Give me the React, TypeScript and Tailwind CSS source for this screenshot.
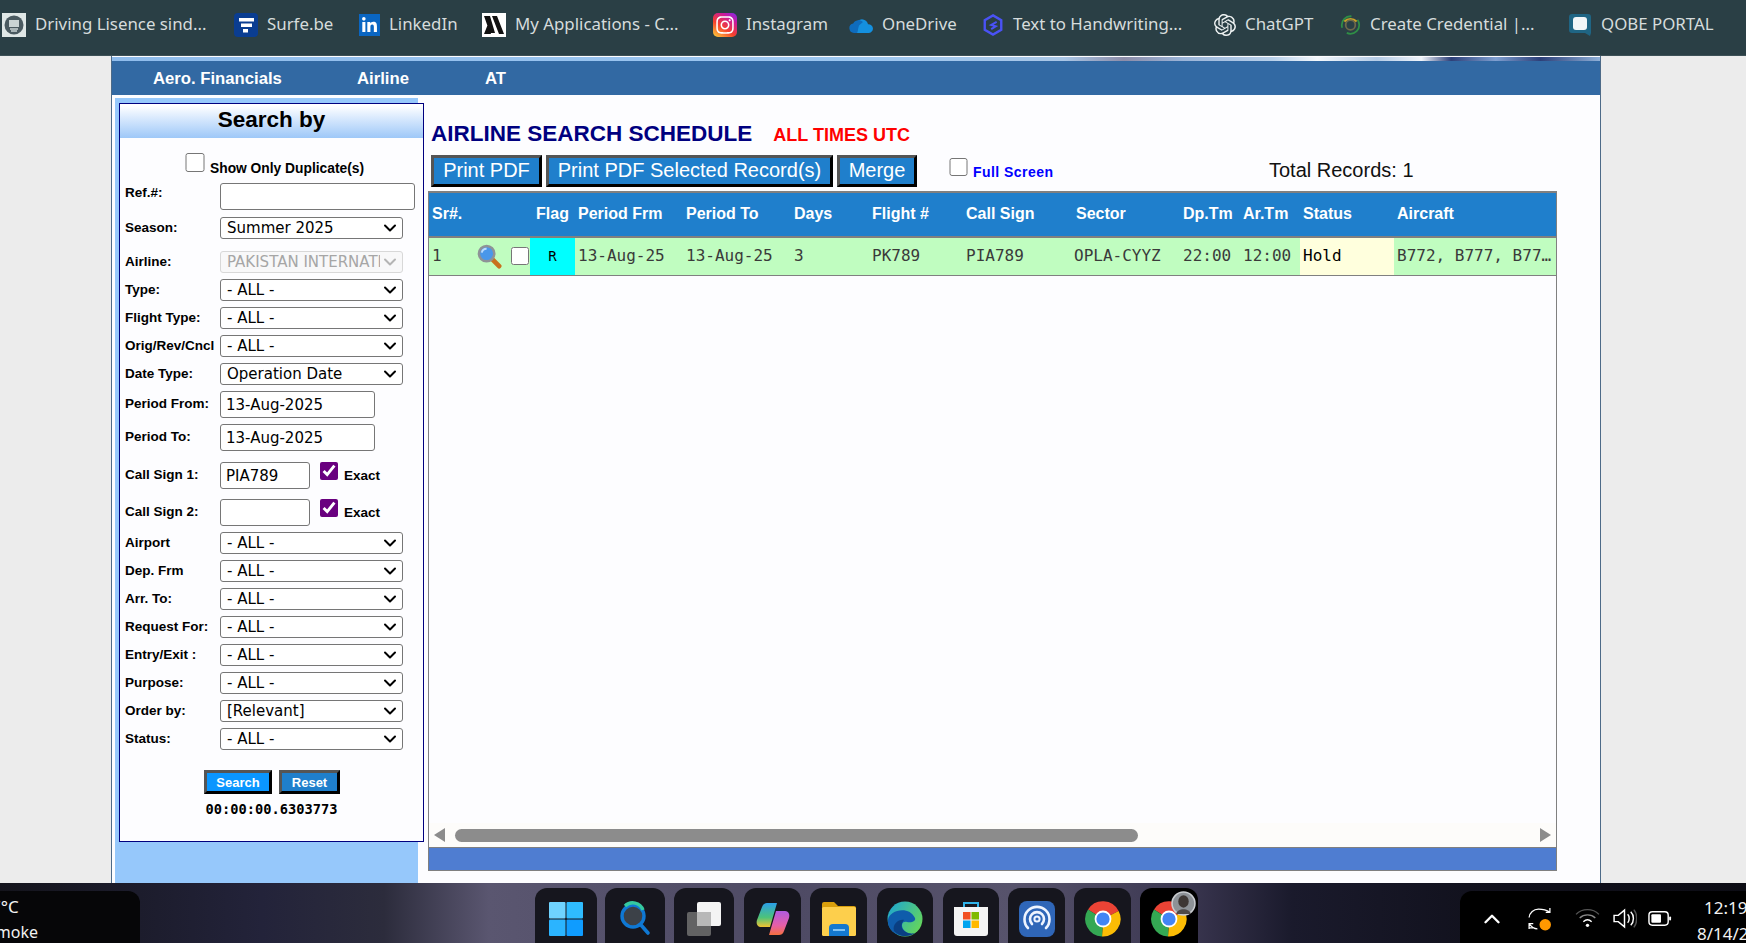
import React from 'react';
import { FaInstagram, FaLinkedinIn } from 'react-icons/fa';
import { SiOpenai } from 'react-icons/si';
import { ChevronDown, ChevronUp } from 'lucide-react';

const bookmarks = [
  { label: 'Driving Lisence sind...', icon: 'crest', box: 'ml-[2px] w-[232px]' },
  { label: 'Surfe.be', icon: 'surfe', box: 'w-[125px]' },
  { label: 'LinkedIn', icon: 'linkedin', box: 'w-[123px]' },
  { label: 'My Applications - C...', icon: 'apps', box: 'w-[231px]' },
  { label: 'Instagram', icon: 'instagram', box: 'w-[136px]' },
  { label: 'OneDrive', icon: 'onedrive', box: 'w-[133px]' },
  { label: 'Text to Handwriting...', icon: 'handwriting', box: 'w-[232px]' },
  { label: 'ChatGPT', icon: 'chatgpt', box: 'w-[126px]' },
  { label: 'Create Credential |...', icon: 'credential', box: 'w-[228px]' },
  { label: 'QOBE PORTAL', icon: 'qobe', box: 'w-[160px]' },
];

const BookmarkIcon = ({ name }: { name: string }) => {
  switch (name) {
    case 'crest':
      return (
        <svg viewBox="0 0 24 24" className="h-6 w-6 shrink-0">
          <rect width="24" height="24" fill="#dfe7e6" />
          <circle cx="12" cy="12" r="9.5" fill="#4a5a60" />
          <rect x="7" y="7" width="10" height="7" fill="#c9d3d3" />
          <path d="M8 16h8M9 18h6" stroke="#c9d3d3" strokeWidth="1.5" />
        </svg>
      );
    case 'surfe':
      return (
        <svg viewBox="0 0 24 24" className="h-6 w-6 shrink-0">
          <rect width="24" height="24" rx="4" fill="#0a3d91" />
          <rect x="5" y="5" width="15" height="3.5" fill="#fff" />
          <rect x="7" y="10.5" width="11" height="3.5" fill="#fff" />
          <rect x="9" y="16" width="5" height="3.5" fill="#fff" />
        </svg>
      );
    case 'linkedin':
      return (
        <span className="flex h-[22px] w-[21px] shrink-0 items-center justify-center bg-[#0a66c2] text-white">
          <FaLinkedinIn size={17} />
        </span>
      );
    case 'apps':
      return (
        <svg viewBox="0 0 24 24" className="h-6 w-6 shrink-0">
          <rect width="24" height="24" fill="#fff" />
          <path d="M2 3h6l5 17H8zM10 3h5l7 18h-5zM2 21l4-10 3 10z" fill="#111" />
        </svg>
      );
    case 'instagram':
      return (
        <span className="flex h-6 w-6 shrink-0 items-center justify-center rounded-[5px] bg-[linear-gradient(35deg,#fdc43a_5%,#f5402c_40%,#c9199e_75%,#7a2cf0)] text-white">
          <FaInstagram size={20} />
        </span>
      );
    case 'onedrive':
      return (
        <svg viewBox="0 0 24 16" className="h-[16px] w-6 shrink-0">
          <path d="M9 4a6 6 0 0 1 10 3.2A4.4 4.4 0 0 1 20 16H8z" fill="#1490df" />
          <path d="M5 16a4.8 4.8 0 0 1-.8-9.5A6 6 0 0 1 14 5l-4 3.5L8 16z" fill="#0f6cbd" />
        </svg>
      );
    case 'handwriting':
      return (
        <svg viewBox="0 0 24 24" className="h-6 w-[22px] shrink-0">
          <path d="M12 1.5 21 6.7v10.6L12 22.5 3 17.3V6.7z" fill="none" stroke="#4a52f5" strokeWidth="2.6" />
          <path d="M16 8.5 10 12l5 1.5-5 3" fill="none" stroke="#4a52f5" strokeWidth="2.2" />
        </svg>
      );
    case 'chatgpt':
      return <SiOpenai size={22} className="shrink-0 text-[#eef2f2]" />;
    case 'credential':
      return (
        <svg viewBox="0 0 24 24" className="h-6 w-[21px] shrink-0">
          <circle cx="12" cy="12" r="10" fill="none" stroke="#2f8f46" strokeWidth="2" strokeDasharray="20 8" />
          <path d="M5 8a10 10 0 0 1 14 0" fill="none" stroke="#c9a227" strokeWidth="2.4" />
          <circle cx="12" cy="12" r="5.5" fill="none" stroke="#6f6a4a" strokeWidth="2" />
        </svg>
      );
    default:
      return (
        <svg viewBox="0 0 24 24" className="h-6 w-6 shrink-0">
          <path d="M4 1h16a3 3 0 0 1 3 3v16l-1 3-5-3H4a3 3 0 0 1-3-3V4a3 3 0 0 1 3-3z" fill="#1f6584" />
          <rect x="5" y="4" width="14" height="13" rx="3" fill="#f2f6f8" />
        </svg>
      );
  }
};

const labelClass = "w-[95px] shrink-0 pb-[1px] text-[13.5px] font-bold leading-none whitespace-nowrap text-black";
const selectClass = "block h-[22px] w-full appearance-none rounded-[3px] border pr-[22px] pl-[6px] font-['DejaVu_Sans',sans-serif] text-[15px] leading-none";
const inputClass = "h-[27px] rounded-[3px] border border-[#767676] bg-white px-[5px] font-['DejaVu_Sans',sans-serif] text-[15px] text-black";
const raisedClass = "border-[3px] border-t-[#555555] border-l-[#555555] border-r-black border-b-black text-white";

const SelectRow = ({ label, value = '- ALL -', mt = 'mt-[6px]', disabled = false }: { label: string; value?: string; mt?: string; disabled?: boolean }) => (
  <div className={`flex items-center pl-[5px] ${mt}`}>
    <span className={labelClass}>{label}</span>
    <div className="relative h-[22px] w-[183px]">
      <select
        disabled={disabled}
        defaultValue={value}
        className={`${selectClass} ${disabled ? 'border-[#d8d8d8] bg-[#f8f8f9] text-[#a6a6a6]' : 'border-[#767676] bg-white text-black'}`}
      >
        <option>{value}</option>
      </select>
      <ChevronDown
        size={20}
        strokeWidth={2.4}
        className={`pointer-events-none absolute top-[1px] right-[3px] ${disabled ? 'text-[#b4b4b4]' : 'text-black'}`}
      />
    </div>
  </div>
);

const CallSignRow = ({ label, value, mt }: { label: string; value: string; mt: string }) => (
  <div className={`flex items-center pl-[5px] ${mt}`}>
    <span className={labelClass}>{label}</span>
    <input defaultValue={value} className={`${inputClass} w-[90px]`} />
    <input type="checkbox" defaultChecked className="mb-[9px] ml-[10px] h-[18px] w-[18px] accent-[#69007f]" />
    <span className="mt-[1px] ml-[6px] text-[13.5px] font-bold text-black">Exact</span>
  </div>
);

const Sidebar = () => (
  <aside className="ml-[3px] h-full w-[303px] shrink-0 bg-[#96c8fb] pt-[5px] pl-[4px]">
    <div className="h-[739px] w-[305px] border border-[#00007f] bg-[#fdfdff]">
      <div className="h-[34px] bg-[linear-gradient(180deg,#ffffff_5%,#d5e7fd_45%,#9ec8f8_100%)] text-center text-[22.5px] leading-[31px] font-bold text-black">
        Search by
      </div>
      <div className="mt-[15px] flex h-[19px] items-end pl-[65px]">
        <input type="checkbox" className="h-[19px] w-[20px]" />
        <span className="ml-[5px] translate-y-[8px] text-[13.8px] font-bold text-black">Show Only Duplicate(s)</span>
      </div>
      <div className="mt-[11px] flex items-center pl-[5px]">
        <span className={`${labelClass} mb-[6px]`}>Ref.#:</span>
        <input className={`${inputClass} h-[26px] w-[195px]`} />
      </div>
      <SelectRow label="Season:" value="Summer 2025" mt="mt-[7px]" />
      <SelectRow label="Airline:" value="PAKISTAN INTERNATIONAL" mt="mt-[12px]" disabled />
      <SelectRow label="Type:" />
      <SelectRow label="Flight Type:" />
      <SelectRow label="Orig/Rev/Cncl" />
      <SelectRow label="Date Type:" value="Operation Date" />
      <div className="mt-[6px] flex items-center pl-[5px]">
        <span className={labelClass}>Period From:</span>
        <input defaultValue="13-Aug-2025" className={`${inputClass} w-[155px]`} />
      </div>
      <div className="mt-[6px] flex items-center pl-[5px]">
        <span className={labelClass}>Period To:</span>
        <input defaultValue="13-Aug-2025" className={`${inputClass} w-[155px]`} />
      </div>
      <CallSignRow label="Call Sign 1:" value="PIA789" mt="mt-[11px]" />
      <CallSignRow label="Call Sign 2:" value="" mt="mt-[10px]" />
      <SelectRow label="Airport" />
      <SelectRow label="Dep. Frm" />
      <SelectRow label="Arr. To:" />
      <SelectRow label="Request For:" />
      <SelectRow label="Entry/Exit :" />
      <SelectRow label="Purpose:" />
      <SelectRow label="Order by:" value="[Relevant]" />
      <SelectRow label="Status:" />
      <div className="mt-[20px] flex justify-center gap-[7px] pl-[1px]">
        <button className={`h-[24px] w-[68px] bg-[#0a96ff] text-[13px] leading-none font-bold ${raisedClass}`}>Search</button>
        <button className={`h-[24px] w-[61px] bg-[#1f7fcc] text-[13px] leading-none font-bold ${raisedClass}`}>Reset</button>
      </div>
      <div className="mt-[7px] text-center font-['DejaVu_Sans_Mono',monospace] text-[13.7px] leading-[16px] font-bold text-black">
        00:00:00.6303773
      </div>
    </div>
  </aside>
);

const Magnifier = () => (
  <svg viewBox="0 0 26 26" className="h-[25px] w-[25px]">
    <path d="M15 15 23 23" stroke="#c8701e" strokeWidth="5" strokeLinecap="round" />
    <circle cx="10" cy="10" r="8" fill="#4a97ea" stroke="#8e9397" strokeWidth="2.6" />
    <path d="M5 9a5 5 0 0 1 5-4" stroke="#bcdcff" strokeWidth="2" fill="none" />
  </svg>
);

const headers = [
  { label: 'Sr#.', span: 3, extra: '' },
  { label: 'Flag', span: 1, extra: 'pl-[6px]' },
  { label: 'Period Frm', span: 1, extra: '' },
  { label: 'Period To', span: 1, extra: '' },
  { label: 'Days', span: 1, extra: '' },
  { label: 'Flight #', span: 1, extra: '' },
  { label: 'Call Sign', span: 1, extra: '' },
  { label: 'Sector', span: 1, extra: '' },
  { label: 'Dp.Tm', span: 1, extra: '' },
  { label: 'Ar.Tm', span: 1, extra: '' },
  { label: 'Status', span: 1, extra: '' },
  { label: 'Aircraft', span: 1, extra: '' },
];

const cellClass = "truncate px-[3px] text-left text-[16px] font-normal";

const ScheduleTable = () => (
  <div className="flex h-[680px] w-[1129px] flex-col border border-t-2 border-[#808080] bg-[#fdfdff]">
    <div className="flex-1">
      <table className="w-full table-fixed border-collapse font-['DejaVu_Sans_Mono',monospace] text-[#3a3a3a]">
        <colgroup>
          <col className="w-[46px]" />
          <col className="w-[35px]" />
          <col className="w-[20px]" />
          <col className="w-[45px]" />
          <col className="w-[108px]" />
          <col className="w-[108px]" />
          <col className="w-[78px]" />
          <col className="w-[94px]" />
          <col className="w-[110px]" />
          <col className="w-[107px]" />
          <col className="w-[60px]" />
          <col className="w-[60px]" />
          <col className="w-[94px]" />
          <col />
        </colgroup>
        <thead>
          <tr className="h-[44px] border-b-2 border-[#808080] bg-[#1f7fcc]">
            {headers.map((h) => (
              <th key={h.label} colSpan={h.span} className={`px-[3px] pb-[2px] text-left font-['Liberation_Sans',sans-serif] text-[16px] font-bold whitespace-nowrap text-white ${h.extra}`}>
                {h.label}
              </th>
            ))}
          </tr>
        </thead>
        <tbody>
          <tr className="h-[38px] border-b border-[#808080] bg-[#c0fdc0]">
            <td className={cellClass}>1</td>
            <td className="pl-[2px]"><Magnifier /></td>
            <td><input type="checkbox" className="ml-[1px] block h-[18px] w-[18px]" /></td>
            <td className="bg-[#00ffff] text-center text-[14px] text-black">R</td>
            <td className={cellClass}>13-Aug-25</td>
            <td className={cellClass}>13-Aug-25</td>
            <td className={cellClass}>3</td>
            <td className={cellClass}>PK789</td>
            <td className={cellClass}>PIA789</td>
            <td className={`${cellClass} pl-[1px]`}>OPLA-CYYZ</td>
            <td className={cellClass}>22:00</td>
            <td className={cellClass}>12:00</td>
            <td className={`${cellClass} bg-[#ffffdd] text-black`}>Hold</td>
            <td className={cellClass}>B772, B777, B777, B773</td>
          </tr>
        </tbody>
      </table>
    </div>
    <div className="flex h-[24px] items-center bg-[#fdfcfa] pr-[5px] pl-[5px]">
      <div className="h-0 w-0 border-y-[7px] border-r-[11px] border-y-transparent border-r-[#8c8c8c]" />
      <div className="ml-[10px] h-[13px] w-[683px] rounded-full bg-[#8c8c8c]" />
      <div className="ml-auto h-0 w-0 border-y-[7px] border-l-[11px] border-y-transparent border-l-[#8c8c8c]" />
    </div>
    <div className="h-[23px] border-t border-[#808080] bg-[#4f7dd1]" />
  </div>
);

const tiles = ['ml-[535px] w-[62px]', 'ml-[8px] w-[60px]', 'ml-[9px] w-[60px]', 'ml-[10px] w-[57px]', 'ml-[9px] w-[57px]', 'ml-[10px] w-[56px]', 'ml-[10px] w-[56px]', 'ml-[9px] w-[57px]', 'ml-[9px] w-[57px]', 'ml-[9px] w-[58px]'];

const TaskIcon = ({ index }: { index: number }) => {
  const size = 'h-[36px] w-[36px]';
  switch (index) {
    case 0:
      return (
        <svg viewBox="0 0 36 36" className={size}>
          <rect x="1" y="1" width="16.5" height="16.5" rx="1" fill="#6fd3ff" />
          <rect x="18.5" y="1" width="16.5" height="16.5" rx="1" fill="#2fbcff" />
          <rect x="1" y="18.5" width="16.5" height="16.5" rx="1" fill="#2bb4ff" />
          <rect x="18.5" y="18.5" width="16.5" height="16.5" rx="1" fill="#0f9cff" />
        </svg>
      );
    case 1:
      return (
        <svg viewBox="0 0 36 36" className={size}>
          <circle cx="16" cy="15" r="11" fill="#3c4148" stroke="#0f78d4" strokeWidth="3.4" />
          <path d="M8 5a11 11 0 0 1 18 4" fill="none" stroke="#35c9a0" strokeWidth="3.4" />
          <path d="M24 24l7 8" stroke="#0f78d4" strokeWidth="3.6" strokeLinecap="round" />
        </svg>
      );
    case 2:
      return (
        <svg viewBox="0 0 36 36" className={size}>
          <rect x="11" y="1" width="24" height="24" rx="2" fill="#f4f4f4" />
          <rect x="1" y="11" width="24" height="24" rx="2" fill="#6a6a6a" fillOpacity="0.9" />
          <rect x="11" y="11" width="14" height="14" fill="#b8b8b8" />
        </svg>
      );
    case 3:
      return (
        <svg viewBox="0 0 36 36" className={size}>
          <defs>
            <linearGradient id="copilotA" x1="0" y1="0" x2="0" y2="1">
              <stop offset="0" stopColor="#2b9fe8" />
              <stop offset="0.6" stopColor="#4cc37a" />
              <stop offset="1" stopColor="#f2c230" />
            </linearGradient>
            <linearGradient id="copilotB" x1="0" y1="0" x2="0" y2="1">
              <stop offset="0" stopColor="#b05be0" />
              <stop offset="0.6" stopColor="#e65fa8" />
              <stop offset="1" stopColor="#f5703e" />
            </linearGradient>
          </defs>
          <path d="M12 2h10l-7 24H6c-4 0-5-4-4-7l5-13c1-3 3-4 5-4z" fill="url(#copilotA)" />
          <path d="M24 34H14l7-24h9c4 0 5 4 4 7l-5 13c-1 3-3 4-5 4z" fill="url(#copilotB)" />
        </svg>
      );
    case 4:
      return (
        <svg viewBox="0 0 36 36" className={size}>
          <path d="M1 3a2 2 0 0 1 2-2h10l4 4h16a2 2 0 0 1 2 2v4H1z" fill="#d99f0c" />
          <rect x="1" y="6" width="34" height="29" rx="1.5" fill="#fdcf4c" />
          <path d="M8 35v-8a4 4 0 0 1 4-4h12a4 4 0 0 1 4 4v8z" fill="#1478cf" />
          <rect x="12" y="28" width="12" height="2" fill="#7fc2f5" />
        </svg>
      );
    case 5:
      return (
        <svg viewBox="0 0 36 36" className={size}>
          <defs>
            <linearGradient id="edgeA" x1="0" y1="0" x2="1" y2="0.6">
              <stop offset="0" stopColor="#1aa3d8" />
              <stop offset="1" stopColor="#62d45f" />
            </linearGradient>
          </defs>
          <circle cx="18" cy="18" r="17.5" fill="url(#edgeA)" />
          <path d="M1 19C2 9 22 4 28 17c1 3-3 5-8 4-5-1-6 3-4 7 2 3 7 6 12 4a18 18 0 0 1-10 3C8 35 0 28 1 19z" fill="#0f5cab" />
          <path d="M17 19c-5-1-12 4-10 11 3 3 7 5 11 5 4 0 7-1 10-3-5 2-11-1-13-5-1-3 0-6 2-8z" fill="#0a3f82" />
        </svg>
      );
    case 6:
      return (
        <svg viewBox="0 0 36 36" className={size}>
          <path d="M11 6V2h14v4" fill="none" stroke="#2fb2e8" strokeWidth="2" />
          <path d="M1 6h34v26a3 3 0 0 1-3 3H4a3 3 0 0 1-3-3z" fill="#f4f4f4" />
          <rect x="10" y="11" width="7.5" height="7.5" fill="#f25022" />
          <rect x="18.5" y="11" width="7.5" height="7.5" fill="#7fba00" />
          <rect x="10" y="19.5" width="7.5" height="7.5" fill="#00a4ef" />
          <rect x="18.5" y="19.5" width="7.5" height="7.5" fill="#ffb900" />
        </svg>
      );
    case 7:
      return (
        <svg viewBox="0 0 36 36" className={size}>
          <rect width="36" height="36" rx="8" fill="#2f66b8" />
          <g fill="none" stroke="#eef4ff" strokeWidth="2.6" strokeLinecap="round">
            <path d="M9 27a12.5 12.5 0 1 1 18 0" />
            <path d="M13 23a7 7 0 1 1 10 0" />
          </g>
          <circle cx="18" cy="18" r="2.6" fill="none" stroke="#eef4ff" strokeWidth="2" />
        </svg>
      );
    default:
      return (
        <svg viewBox="0 0 36 36" className={size}>
          <path d="M18 18 3 8.5A17.5 17.5 0 0 1 33.6 10z" fill="#ea4335" />
          <path d="M18 18 33.6 10A17.5 17.5 0 0 1 17 35.5z" fill="#fbbc05" />
          <path d="M18 18 17 35.5A17.5 17.5 0 0 1 3 8.5z" fill="#34a853" />
          <circle cx="18" cy="18" r="8.4" fill="#fff" />
          <circle cx="18" cy="18" r="6.6" fill="#4285f4" />
        </svg>
      );
  }
};

const Taskbar = () => (
  <footer className="relative flex h-[60px] shrink-0 overflow-hidden bg-[linear-gradient(90deg,#14141c_0%,#23233a_15%,#2c2c3c_22%,#5a5670_28%,#4e4a64_45%,#57536c_58%,#3a3650_68%,#1a1a2c_74%,#12121e_84%,#0c0c14_100%)]">
    <div className="absolute top-[8px] left-0 h-[60px] w-[140px] overflow-hidden rounded-tr-[12px] bg-[#060608] font-['Noto_Sans',sans-serif] text-[16px] leading-[25px] text-[#f2f2f2]">
      <div className="mt-[3px] -ml-[9px] text-[17px]">7°C</div>
      <div className="mt-[1px] -ml-[13px]">Smoke</div>
    </div>
    <div className="flex items-start">
      {tiles.map((tile, i) => (
        <div key={tile} className={`relative mt-[5px] flex h-[60px] items-start justify-center rounded-t-[12px] pt-[13px] ${i === 9 ? 'bg-black' : 'bg-[#16161e]'} ${tile}`}>
          <TaskIcon index={i} />
          {i === 9 && (
            <svg viewBox="0 0 24 24" className="absolute top-[3px] right-[2px] h-[25px] w-[25px]">
              <circle cx="12" cy="12" r="11" fill="#8d9297" stroke="#c9ccd0" strokeWidth="1.5" />
              <ellipse cx="12" cy="10" rx="5" ry="6" fill="#3d3734" />
              <path d="M5 22c1-6 13-6 14 0z" fill="#4e4a48" />
            </svg>
          )}
        </div>
      ))}
    </div>
    <div className="mt-[8px] ml-auto flex h-[60px] w-[286px] shrink-0 rounded-tl-[12px] bg-black text-white">
      <ChevronUp size={26} strokeWidth={2.2} className="mt-[15px] ml-[19px] shrink-0" />
      <svg viewBox="0 0 24 24" className="mt-[15px] ml-[22px] h-[25px] w-[25px] shrink-0" fill="none" stroke="#fff" strokeWidth="1.2">
        <path d="M2 11a9 9 0 0 1 9-8c4 0 8 1 11 3M22 2v4h-4M2 21h4" />
        <path d="M2 17c2 3 5 5 8 5M2 22v-5h4" />
        <circle cx="17.5" cy="18" r="5.5" fill="#ff9800" stroke="none" />
      </svg>
      <svg viewBox="0 0 24 24" className="mt-[14px] ml-[23px] h-[25px] w-[25px] shrink-0" fill="none" stroke="#8a8a8a" strokeWidth="1.3">
        <path d="M1 9c6-6 16-6 22 0" stroke="#555" />
        <path d="M4.5 12.5c4-4 11-4 15 0" />
        <path d="M8 16c2.5-2.4 5.5-2.4 8 0" stroke="#fff" />
        <circle cx="12" cy="19.5" r="1.6" fill="#fff" stroke="none" />
      </svg>
      <svg viewBox="0 0 24 24" className="mt-[15px] ml-[12px] h-[25px] w-[25px] shrink-0" fill="none" stroke="#fff" strokeWidth="1.4">
        <path d="M2 9h4l6-5v16l-6-5H2z" />
        <path d="M15 8c2 2 2 6 0 8M18 5.5c3.4 3.4 3.4 9.6 0 13" />
        <path d="M21 3.5c3.6 4.5 3.6 12.5 0 17" stroke="#555" />
      </svg>
      <svg viewBox="0 0 26 24" className="mt-[15px] ml-[11px] h-[25px] w-[25px] shrink-0" fill="none">
        <rect x="1" y="5" width="20" height="14" rx="3.5" stroke="#fff" strokeWidth="1.5" />
        <rect x="3.5" y="7.5" width="10" height="9" rx="1" fill="#fff" />
        <rect x="22" y="10" width="2" height="4" rx="1" fill="#fff" />
      </svg>
      <div className="ml-[24px] min-w-0 flex-1 overflow-hidden pt-[4px] font-['Noto_Sans',sans-serif] text-[17px] leading-[26px] whitespace-nowrap text-[#f2f2f2]">
        <div className="pl-[7px]">12:19 PM</div>
        <div>8/14/2025</div>
      </div>
    </div>
  </footer>
);

export default function App() {
  return (
    <div className="flex h-screen w-full flex-col overflow-hidden bg-[#ececec] font-['Liberation_Sans',sans-serif]">
      {/* Browser bookmarks */}
      <header className="flex h-[56px] shrink-0 items-start border-b border-[#3d5157] bg-[#2a3f45] pt-[13px] font-['Noto_Sans',sans-serif] text-[16.85px] text-[#d6dcdc]">
        {bookmarks.map((b) => (
          <div key={b.label} className={`flex h-[24px] shrink-0 items-center gap-[9px] whitespace-nowrap ${b.box}`}>
            <BookmarkIcon name={b.icon} />
            <span className="pb-[2px] leading-none">{b.label}</span>
          </div>
        ))}
      </header>

      <div className="ml-[111px] flex min-h-0 w-[1490px] flex-1 flex-col border-x border-[#4d6a88] bg-[#fdfdff] pt-[1px]">
        <div className="h-[4px] shrink-0 bg-[linear-gradient(90deg,#8fbcec_0%,#9cc6f0_50%,#a9c6e6_64%,#8c8ca8_68%,#9ab4d8_72%,#b8d0ea_78%,#f4f8fc_81%,#b4cbe6_85%,#f0f4fa_88%,#2c3f78_90%,#7f9fd0_93%,#2c3f78_96%,#8fb0d8_100%)]" />
        <nav className="flex h-[34px] shrink-0 items-center bg-[#3269a3] pt-[1px] pl-[41px] text-[16.7px] font-bold text-white">
          <span className="w-[204px]">Aero. Financials</span>
          <span className="w-[128px]">Airline</span>
          <span>AT</span>
        </nav>

        <div className="flex min-h-0 flex-1 pt-[3px]">
          <Sidebar />
          <main className="ml-[10px] min-w-0 flex-1">
            <div className="mt-[22px] flex h-[28px] items-center pl-[3px]">
              <h1 className="text-[22.5px] font-bold whitespace-nowrap text-[#00007f]">AIRLINE SEARCH SCHEDULE</h1>
              <span className="mt-[2px] ml-[21px] text-[18px] font-bold whitespace-nowrap text-[#ff0000]">ALL TIMES UTC</span>
            </div>
            <div className="mt-[7px] flex h-[32px] items-start pl-[3px]">
              <button className={`h-[32px] w-[111px] bg-[#1f7fcc] pb-[2px] text-[20px] leading-none ${raisedClass}`}>Print PDF</button>
              <button className={`ml-[4px] h-[32px] w-[287px] bg-[#1f7fcc] pb-[2px] text-[20px] leading-none ${raisedClass}`}>Print PDF Selected Record(s)</button>
              <button className={`ml-[4px] h-[32px] w-[80px] bg-[#1f7fcc] pb-[2px] text-[20px] leading-none ${raisedClass}`}>Merge</button>
              <input type="checkbox" className="mt-[3px] ml-[32px] h-[18px] w-[19px]" />
              <span className="mt-[9px] ml-[5px] w-[296px] text-[14px] leading-[16px] font-bold tracking-[0.45px] text-[#0000ff]">Full Screen</span>
              <span className="mt-[3px] text-[20px] leading-[24px] whitespace-nowrap text-[#111]">Total Records: 1</span>
            </div>
            <div className="mt-[4px]">
              <ScheduleTable />
            </div>
          </main>
        </div>
      </div>

      <Taskbar />
    </div>
  );
}
